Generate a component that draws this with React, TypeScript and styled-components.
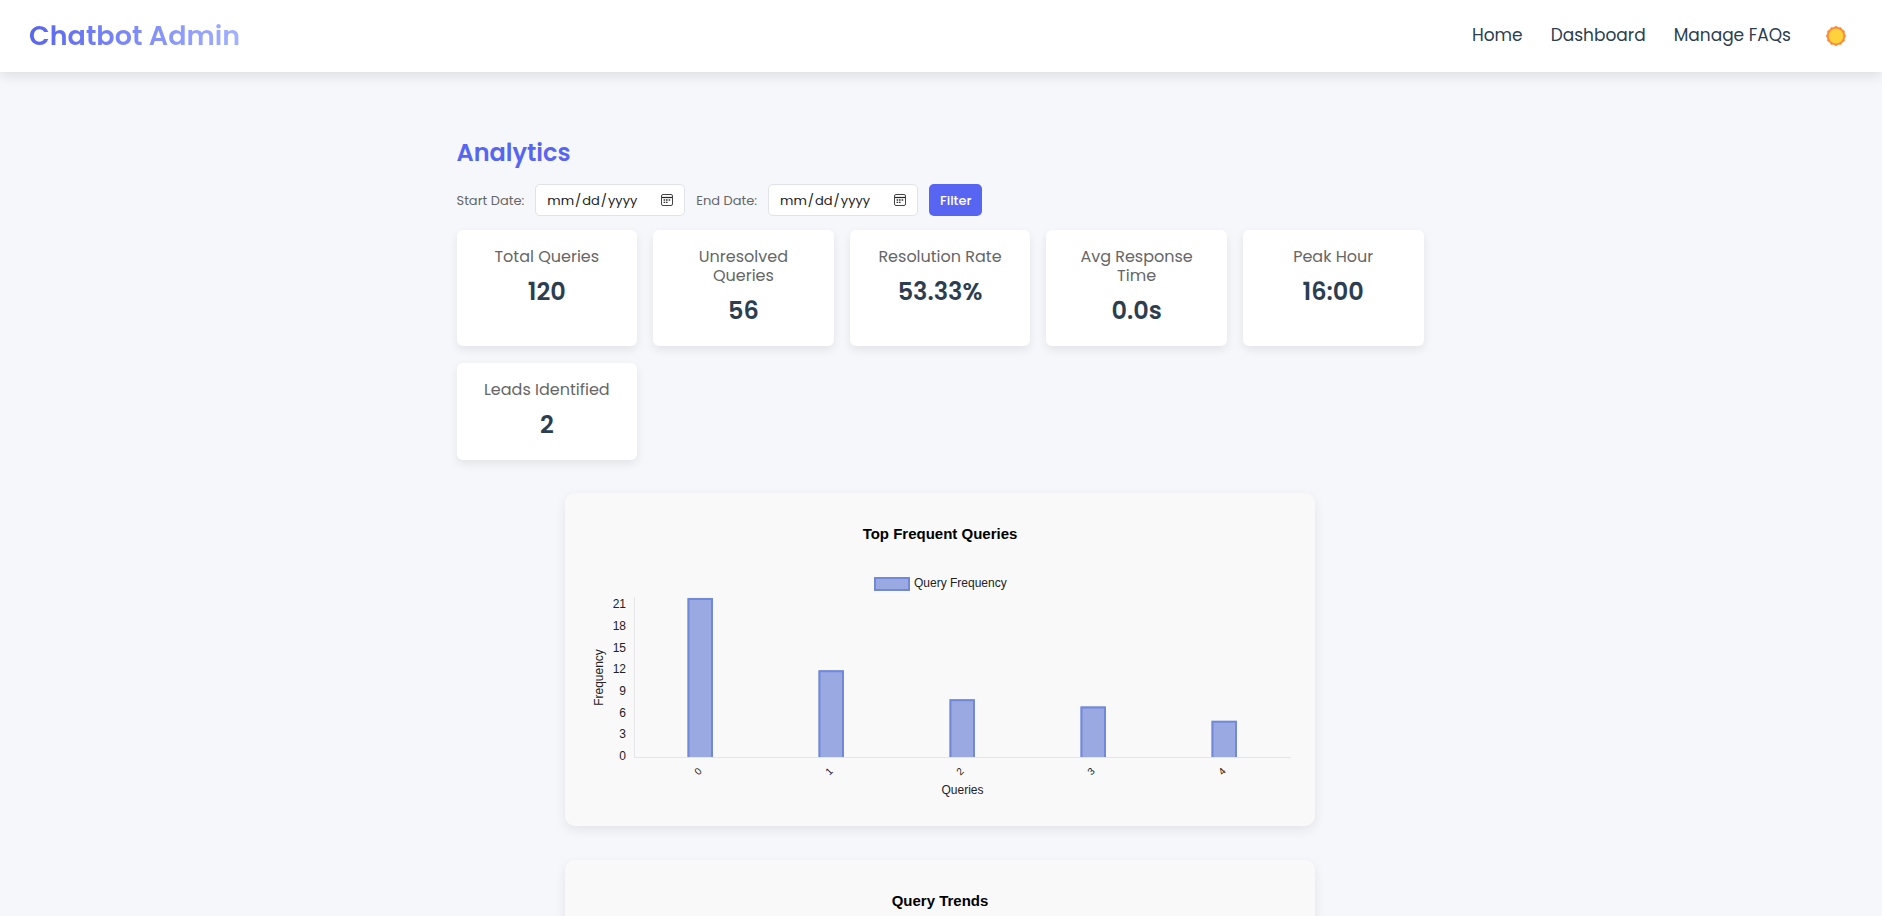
import React from "react";
import styled, { createGlobalStyle } from "styled-components";

const GlobalStyle = createGlobalStyle`
  *, *::before, *::after { box-sizing: border-box; }
  html { overflow-x: hidden; }
  body {
    margin: 0;
    background: #f5f7fb;
    color: #2c3e50;
    font-family: Poppins, Inter, "Open Sans", sans-serif;
    font-size: 16px;
    line-height: 19px;
  }
`;

const Header = styled.header`
  display: flex;
  align-items: center;
  justify-content: space-between;
  height: 72px;
  padding: 0 36px 0 29px;
  background: #fff;
  box-shadow: 0 4px 12px rgba(0, 0, 0, 0.1);
`;

const Brand = styled.div`
  font-size: 27px;
  line-height: 36px;
  font-weight: 600;
  background: linear-gradient(90deg, #5865f2, #a3b1ff);
  background-clip: text;
  -webkit-background-clip: text;
  color: transparent;
`;

const Nav = styled.nav`
  display: flex;
  align-items: center;
  gap: 28px;
`;

const NavLink = styled.a`
  padding-bottom: 2px;
  color: #2c3e50;
  font-size: 17px;
  line-height: 24px;
  text-decoration: none;
`;

const ThemeButton = styled.button`
  display: flex;
  margin-left: 7px;
  padding: 0;
  border: 0;
  background: none;
  cursor: pointer;
`;

const Main = styled.main`
  padding: 65px 18px 32px 16px;
`;

const Content = styled.div`
  max-width: 967px;
  margin: 0 auto;
`;

const Title = styled.h2`
  margin: 0 0 15px;
  color: #5865f2;
  font-size: 24px;
  line-height: 32px;
  font-weight: 600;
`;

const Filters = styled.form`
  display: flex;
  flex-wrap: wrap;
  align-items: center;
  gap: 11px;
  margin-bottom: 14px;
`;

const FilterLabel = styled.label`
  display: flex;
  align-items: center;
  gap: 11px;
  color: #666;
  font-size: 13px;
`;

const DateField = styled.span`
  position: relative;
  display: flex;
`;

const DateInput = styled.input`
  width: 150px;
  height: 32px;
  padding: 0 10px;
  border: 1px solid #dfe3ea;
  border-radius: 5px;
  background: #fff;
  color: #222;
  font: inherit;

  &::-webkit-calendar-picker-indicator {
    opacity: 0;
  }
`;

const CalendarGlyph = styled.svg`
  position: absolute;
  top: 10px;
  right: 12px;
  pointer-events: none;
`;

const FilterButton = styled.button`
  height: 32px;
  padding: 0 11px;
  border: 0;
  border-radius: 5px;
  background: #5865f2;
  color: #fff;
  font: inherit;
  font-size: 13px;
  font-weight: 500;
  cursor: pointer;
`;

const Stats = styled.section`
  display: grid;
  grid-template-columns: repeat(auto-fill, minmax(180px, 1fr));
  gap: 17px 16px;
  margin-bottom: 33px;
`;

const StatCard = styled.article`
  padding: 17px 16px 21px;
  border-radius: 6px;
  background: #fff;
  box-shadow: 0 4px 10px rgba(0, 0, 0, 0.08);
  text-align: center;
`;

const StatLabel = styled.h3`
  margin: 0 0 11px;
  color: #666;
  font-size: 16px;
  line-height: 19px;
  font-weight: 400;
`;

const StatValue = styled.p`
  margin: 0;
  font-size: 24px;
  line-height: 29px;
  font-weight: 600;
`;

const Charts = styled.section`
  display: grid;
  gap: 34px;
  max-width: 750px;
  margin: 0 auto;
`;

const ChartCard = styled.article`
  padding: 31px 20px 20px;
  border-radius: 10px;
  background: #f9f9f9;
  box-shadow: 0 4px 12px rgba(0, 0, 0, 0.08);
  font-family: "Liberation Sans", Arial, sans-serif;
`;

const ChartTitle = styled.h3`
  margin: 0 0 21px;
  color: #000;
  font-size: 15px;
  line-height: 20px;
  font-weight: 700;
  text-align: center;
`;

const Plot = styled.svg`
  display: block;
  width: 100%;
  height: auto;
  fill: #222;
  font-size: 12px;
`;

const stats = [
  ["Total Queries", "120"],
  ["Unresolved Queries", "56"],
  ["Resolution Rate", "53.33%"],
  ["Avg Response Time", "0.0s"],
  ["Peak Hour", "16:00"],
  ["Leads Identified", "2"],
];

const frequencies = [22, 12, 8, 7, 5];
const ticks = [0, 3, 6, 9, 12, 15, 18, 21];
const trend = [4, 9, 6, 14, 11];

const BASE = 192;
const UNIT = 7.23;

function SunIcon() {
  const points = Array.from({ length: 24 }, (_, i) => {
    const r = i % 2 ? 8.9 : 9.9;
    const a = (i * Math.PI) / 12;
    return `${(10 + r * Math.sin(a)).toFixed(2)},${(10 - r * Math.cos(a)).toFixed(2)}`;
  }).join(" ");
  return (
    <svg width="20" height="20" viewBox="0 0 20 20" aria-hidden="true">
      <polygon points={points} fill="#ff8736" stroke="#ff8736" strokeWidth="0.4" strokeLinejoin="round" />
      <circle cx="10" cy="10" r="7.4" fill="#fdd23c" />
    </svg>
  );
}

function DatePicker({ name }: { name: string }) {
  return (
    <DateField>
      <DateInput type="date" name={name} />
      <CalendarGlyph width="12" height="12" viewBox="0 0 12 12" aria-hidden="true">
        <rect x="0.5" y="0.5" width="11" height="11" rx="1.5" fill="none" stroke="#444" />
        <path d="M1 3.5h10" stroke="#222" strokeWidth="1.2" />
        <path d="M5 6h1.6M7.6 6h1.6M2.6 8.4h1.6M5 8.4h1.6M2.6 6h1.6" stroke="#333" strokeWidth="1.3" />
      </CalendarGlyph>
    </DateField>
  );
}

function FrequencyPlot() {
  return (
    <Plot viewBox="0 0 710 241" role="img" aria-label="Query frequency by query">
      <rect x="290" y="13" width="34" height="12" fill="#9ba9e3" stroke="#7289da" strokeWidth="2" />
      <text x="329" y="22">Query Frequency</text>
      <path d={`M49.5 32V${BASE + 0.5}H706`} fill="none" stroke="#e6e6e8" />
      {ticks.map((t) => (
        <text key={t} x="41" y={195 - t * UNIT} textAnchor="end">{t}</text>
      ))}
      {frequencies.map((f, i) => {
        const x = 103.5 + i * 131;
        const top = BASE - f * UNIT + 1;
        return (
          <g key={i}>
            <rect x={x - 1} y={top - 1} width="25" height={BASE - top + 1} fill="#9ba9e3" />
            <path d={`M${x} ${BASE}V${top}h23.5V${BASE}`} fill="none" stroke="#7289da" strokeWidth="2" />
            <text
              transform={`translate(${x + 11} 204) rotate(-45)`}
              textAnchor="end"
              dy="4"
              fontSize="10"
            >
              {i}
            </text>
          </g>
        );
      })}
      <text x="377.5" y="229" textAnchor="middle">Queries</text>
      <text transform="translate(18 112.5) rotate(-90)" textAnchor="middle">Frequency</text>
    </Plot>
  );
}

function TrendPlot() {
  return (
    <Plot viewBox="0 0 710 241" role="img" aria-label="Query trends">
      <path d={`M49.5 32V${BASE + 0.5}H706`} fill="none" stroke="#e6e6e8" />
      <polyline
        points={trend.map((v, i) => `${115 + i * 131},${BASE - v * UNIT}`).join(" ")}
        fill="none"
        stroke="#7289da"
        strokeWidth="2"
      />
    </Plot>
  );
}

export default function App() {
  return (
    <>
      <GlobalStyle />
      <Header>
        <Brand>Chatbot Admin</Brand>
        <Nav>
          <NavLink href="#home">Home</NavLink>
          <NavLink href="#dashboard">Dashboard</NavLink>
          <NavLink href="#faqs">Manage FAQs</NavLink>
          <ThemeButton type="button" aria-label="Toggle theme">
            <SunIcon />
          </ThemeButton>
        </Nav>
      </Header>
      <Main>
        <Content>
          <Title>Analytics</Title>
          <Filters onSubmit={(e) => e.preventDefault()}>
            <FilterLabel>
              Start Date:
              <DatePicker name="start" />
            </FilterLabel>
            <FilterLabel>
              End Date:
              <DatePicker name="end" />
            </FilterLabel>
            <FilterButton type="submit">Filter</FilterButton>
          </Filters>
          <Stats>
            {stats.map(([label, value]) => (
              <StatCard key={label}>
                <StatLabel>{label}</StatLabel>
                <StatValue>{value}</StatValue>
              </StatCard>
            ))}
          </Stats>
          <Charts>
            <ChartCard>
              <ChartTitle>Top Frequent Queries</ChartTitle>
              <FrequencyPlot />
            </ChartCard>
            <ChartCard>
              <ChartTitle>Query Trends</ChartTitle>
              <TrendPlot />
            </ChartCard>
          </Charts>
        </Content>
      </Main>
    </>
  );
}
